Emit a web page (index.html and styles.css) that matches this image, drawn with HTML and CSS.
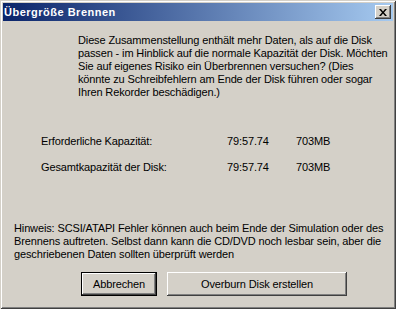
FILE: index.html
```html
<!DOCTYPE html>
<html>
<head>
  <meta charset="utf-8">
  <title>Übergröße Brennen</title>
  <link rel="stylesheet" href="styles.css">
</head>
<body>
  <div class="window">
    <div class="titlebar">
      <span class="title">Übergröße Brennen</span>
      <button class="close" aria-label="Schließen">
        <svg width="8" height="7" viewBox="0 0 8 7">
          <path d="M0 0h2l2 2.5L6 0h2L5 3.5 8 7H6L4 4.5 2 7H0l3-3.5z" fill="#000"/>
        </svg>
      </button>
    </div>

    <div class="content">
      <p class="message">
        Diese Zusammenstellung enthält mehr Daten, als auf die Disk<br>
        passen - im Hinblick auf die normale Kapazität der Disk. Möchten<br>
        Sie auf eigenes Risiko ein Überbrennen versuchen? (Dies<br>
        könnte zu Schreibfehlern am Ende der Disk führen oder sogar<br>
        Ihren Rekorder beschädigen.)
      </p>

      <div class="stats">
        <span>Erforderliche Kapazität:</span>
        <span>79:57.74</span>
        <span>703MB</span>
        <span>Gesamtkapazität der Disk:</span>
        <span>79:57.74</span>
        <span>703MB</span>
      </div>

      <p class="hint">
        Hinweis: SCSI/ATAPI Fehler können auch beim Ende der Simulation oder des<br>
        Brennens auftreten. Selbst dann kann die CD/DVD noch lesbar sein, aber die<br>
        geschriebenen Daten sollten überprüft werden
      </p>

      <div class="buttons">
        <button class="btn default">Abbrechen</button>
        <button class="btn wide">Overburn Disk erstellen</button>
      </div>
    </div>
  </div>
</body>
</html>
```

FILE: styles.css
```css
/* Grundeinstellungen */
html, body {
  margin: 0;
  padding: 0;
  background: #d4d0c8;
  font-family: "Liberation Sans", Arial, sans-serif;
  font-size: 11px;
  color: #000;
}

.window {
  width: 396px;
  height: 309px;
  box-sizing: border-box;
  padding: 3px;
  background: #d4d0c8;
  box-shadow: inset 1px 1px #d4d0c8, inset -1px -1px #404040,
              inset 2px 2px #fff, inset -2px -2px #808080;
  display: flex;
  flex-direction: column;
}

/* Titelleiste */
.titlebar {
  height: 18px;
  display: flex;
  align-items: center;
  justify-content: space-between;
  padding: 0 2px 0 1px;
  background: linear-gradient(to right, #0a246a, #a6caf0);
}

.title {
  color: #fff;
  font-weight: bold;
  font-size: 11px;
  letter-spacing: 0.5px;
}

.close {
  width: 16px;
  height: 14px;
  padding: 0;
  border: none;
  background: #d4d0c8;
  box-shadow: inset -1px -1px #404040, inset 1px 1px #fff,
              inset -2px -2px #808080, inset 2px 2px #d4d0c8;
  display: flex;
  align-items: center;
  justify-content: center;
}

.close svg {
  display: block;
  margin-left: -1px;
}

/* Inhalt */
.content {
  line-height: 13px;
  white-space: nowrap;
  letter-spacing: -0.13px;
}

.message {
  margin: 13px 0 0 75px;
}

.stats {
  display: grid;
  grid-template-columns: 186px 69px auto;
  row-gap: 13px;
  margin: 36px 0 0 38px;
}

.hint {
  margin: 48px 0 0 11px;
}

.buttons {
  display: flex;
  gap: 10px;
  margin: 11px 0 0 78px;
}

.btn {
  height: 24px;
  padding: 0;
  border: none;
  font-family: inherit;
  font-size: 11px;
  letter-spacing: inherit;
  color: #000;
  background: #d4d0c8;
  box-shadow: inset -1px -1px #404040, inset 1px 1px #fff,
              inset -2px -2px #808080, inset 2px 2px #d4d0c8;
}

.btn.default {
  width: 76px;
  border: 1px solid #000;
}

.btn.wide {
  width: 180px;
}
```
